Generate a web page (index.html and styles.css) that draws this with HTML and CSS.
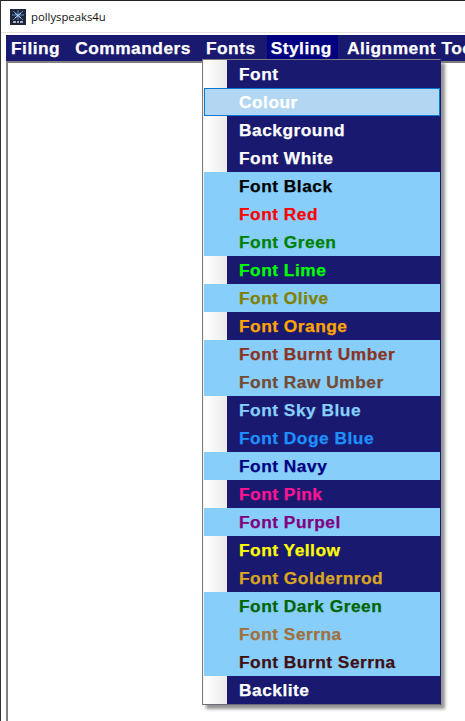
FILE: index.html
```html
<!DOCTYPE html>
<html lang="en">

<head>
    <meta charset="UTF-8">
    <title>pollyspeaks4u</title>
    <link rel="stylesheet" href="styles.css">
</head>

<body>
    <div class="window">
        <div class="titlebar">
            <svg class="app-icon" width="16" height="16" viewBox="0 0 16 16">
                <rect width="16" height="16" fill="#20263a"/>
                <path d="M3 2l10 9M13 2L3 11M8 1v10M2 6h12" stroke="#5b8fd0" stroke-width="1" fill="none"/>
                <path d="M5 4l6 5M11 4L5 9" stroke="#b8d4f0" stroke-width="1" fill="none"/>
                <path d="M3 13h3M7 13h2M10 13h3" stroke="#d5dde8" stroke-width="1.5"/>
            </svg>
            <span class="app-title">pollyspeaks4u</span>
        </div>
        <div class="menubar">
            <span class="menubar-item">Filing</span>
            <span class="menubar-item">Commanders</span>
            <span class="menubar-item">Fonts</span>
            <span class="menubar-item active">Styling</span>
            <span class="menubar-item">Alignment Tools</span>
        </div>
        <div class="editor"></div>

        <!-- dropdown of the Styling menu -->
        <div class="dropdown">
            <div class="item dark"><span class="gutter"></span><span class="label white">Font</span></div>
            <div class="item selected"><span class="label white">Colour</span></div>
            <div class="item dark"><span class="gutter"></span><span class="label white">Background</span></div>
            <div class="item dark"><span class="gutter"></span><span class="label white">Font White</span></div>
            <div class="item light"><span class="label black">Font Black</span></div>
            <div class="item light"><span class="label red">Font Red</span></div>
            <div class="item light"><span class="label green">Font Green</span></div>
            <div class="item dark"><span class="gutter"></span><span class="label lime">Font Lime</span></div>
            <div class="item light"><span class="label olive">Font Olive</span></div>
            <div class="item dark"><span class="gutter"></span><span class="label orange">Font Orange</span></div>
            <div class="item light"><span class="label burnt-umber">Font Burnt Umber</span></div>
            <div class="item light"><span class="label raw-umber">Font Raw Umber</span></div>
            <div class="item dark"><span class="gutter"></span><span class="label sky-blue">Font Sky Blue</span></div>
            <div class="item dark"><span class="gutter"></span><span class="label doge-blue">Font Doge Blue</span></div>
            <div class="item light"><span class="label navy">Font Navy</span></div>
            <div class="item dark"><span class="gutter"></span><span class="label pink">Font Pink</span></div>
            <div class="item light"><span class="label purpel">Font Purpel</span></div>
            <div class="item dark"><span class="gutter"></span><span class="label yellow">Font Yellow</span></div>
            <div class="item dark"><span class="gutter"></span><span class="label goldenrod">Font Goldernrod</span></div>
            <div class="item light"><span class="label dark-green">Font Dark Green</span></div>
            <div class="item light"><span class="label serrna">Font Serrna</span></div>
            <div class="item light"><span class="label burnt-serrna">Font Burnt Serrna</span></div>
            <div class="item dark"><span class="gutter"></span><span class="label white">Backlite</span></div>
        </div>
    </div>
</body>

</html>
```

FILE: styles.css
```css
html, body {
    margin: 0;
    height: 100%;
    overflow: hidden;
    background: #fff;
}

.window {
    position: relative;
    height: 720px;
    border-top: 1px solid #222;
    border-left: 1px solid #333;
    display: flex;
    flex-direction: column;
    font-family: "Liberation Sans", Arial, sans-serif;
    overflow: hidden;
}

.titlebar {
    height: 31px;
    display: flex;
    align-items: center;
    padding-left: 9px;
    border-bottom: 1px solid #e3e3e3;
}

.app-icon {
    margin-right: 5px;
}

.app-title {
    font-family: "Open Sans", sans-serif;
    font-size: 11.3px;
    color: #111;
}

.menubar {
    margin: 2px 0 0 5px;
    height: 26px;
    background: #191970;
    display: flex;
    flex-shrink: 0;
    padding-left: 1px;
    white-space: nowrap;
}

.menubar-item {
    font-size: 17.33px;
    font-weight: bold;
    line-height: 26px;
    letter-spacing: 0.5px;
    -webkit-text-stroke: 0.25px currentColor;
    color: #fff;
    padding: 0 6px 0 4px;
    margin-right: 5px;
}

.menubar-item.active {
    background: #000080;
}

.editor {
    flex: 1;
    margin-left: 5px;
    background: #fff;
    border-top: 2px solid #808080;
    border-left: 2px solid #808080;
}

/* dropdown floats over the editor */
.dropdown {
    position: absolute;
    left: 201px;
    top: 58px;
    width: 236px;
    border: 1px solid #7d7d7d;
    border-right-color: #191970;
    border-bottom-color: #6c6c7c;
    padding: 0 0 0 1px;
    background: #f0f0f0;
    box-shadow: 4px 4px 3px rgba(90, 90, 90, 0.65);
}

.item {
    height: 28px;
    display: flex;
    align-items: center;
    font-size: 17.33px;
    font-weight: bold;
    letter-spacing: 0.5px;
    -webkit-text-stroke: 0.25px currentColor;
}

.item.dark {
    background: #191970;
}

.item.light {
    background: #87cefa;
}

.item.selected {
    background: #b3d7f3;
    box-shadow: inset 0 0 0 1px #0078d7;
}

.gutter {
    width: 23px;
    height: 100%;
    background: linear-gradient(to right, #ffffff, #ebebeb);
}

.item .label {
    margin-left: 35px;
}

.item.dark .label {
    margin-left: 12px;
}

.white { color: #fff; }
.black { color: #000; }
.red { color: #ff0000; }
.green { color: #008000; }
.lime { color: #00ff00; }
.olive { color: #808000; }
.orange { color: #ffa500; }
.burnt-umber { color: #8a3324; }
.raw-umber { color: #734a33; }
.sky-blue { color: #87cefa; }
.doge-blue { color: #1e90ff; }
.navy { color: #000080; }
.pink { color: #ff1493; }
.purpel { color: #800080; }
.yellow { color: #ffff00; }
.goldenrod { color: #daa520; }
.dark-green { color: #006400; }
.serrna { color: #a0703c; }
.burnt-serrna { color: #3f0f14; }
```
